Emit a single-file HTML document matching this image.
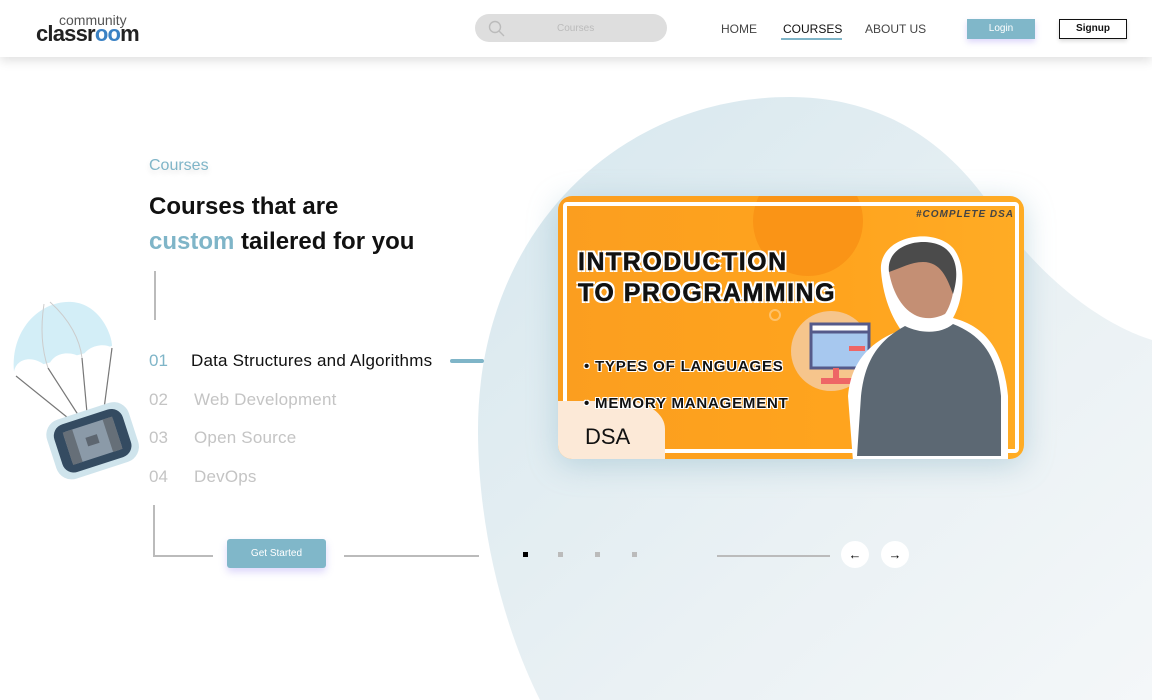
<!DOCTYPE html>
<html><head><meta charset="utf-8"><style>
*{margin:0;padding:0;box-sizing:border-box}
body{width:1152px;height:700px;overflow:hidden;background:#fff;font-family:"Liberation Sans",sans-serif;position:relative}
.abs{position:absolute}
.hdr{left:0;top:0;width:1152px;height:57px;background:#fff;box-shadow:0 4px 10px rgba(0,0,0,.12);z-index:5}
.t{position:absolute;white-space:nowrap}
</style></head><body>
<svg class="abs" style="left:0;top:0" width="1152" height="700">
<defs><linearGradient id="g" x1="0" y1="0" x2="1" y2="1"><stop offset="0" stop-color="#d6e7ee"/><stop offset="0.6" stop-color="#eaf1f4"/><stop offset="1" stop-color="#f4f7f9"/></linearGradient></defs>
<path d="M478 430 C478 230 620 97 790 97 C880 97 950 140 1000 220 C1060 300 1120 330 1152 340 L1152 700 L540 700 C500 620 478 520 478 430Z" fill="url(#g)"/>
</svg>
<div class="abs hdr">
 <div class="t" style="left:59px;top:12px;font-size:14px;color:#555;">community</div>
 <div class="t" style="left:36px;top:21px;font-size:22px;font-weight:bold;color:#222;letter-spacing:-0.8px">classr<span style="color:#3b82c4">oo</span>m</div>
 <div class="abs" style="left:475px;top:14px;width:192px;height:28px;border-radius:14px;background:#dedede"></div>
 <svg class="abs" style="left:488px;top:20px" width="18" height="18"><circle cx="7" cy="7" r="5.5" fill="none" stroke="#bbb" stroke-width="1.4"/><line x1="11" y1="11" x2="16" y2="16" stroke="#bbb" stroke-width="1.4"/></svg>
 <div class="t" style="left:557px;top:23px;font-size:10px;color:#bbb">Courses</div>
 <div class="t" style="left:721px;top:22px;font-size:12px;color:#444">HOME</div>
 <div class="t" style="left:783px;top:22px;font-size:12px;color:#111">COURSES</div>
 <div class="abs" style="left:781px;top:38px;width:61px;height:2px;background:#7fb5c8"></div>
 <div class="t" style="left:865px;top:22px;font-size:12px;color:#444">ABOUT US</div>
 <div class="abs" style="left:967px;top:19px;width:68px;height:20px;background:#80b7c9;box-shadow:0 3px 6px rgba(140,120,240,.3);color:#fff;font-size:10px;text-align:center;line-height:20px">Login</div>
 <div class="abs" style="left:1059px;top:19px;width:68px;height:20px;border:1.5px solid #111;color:#111;font-size:10px;font-weight:bold;text-align:center;line-height:17px;box-shadow:0 2px 4px rgba(0,0,0,.15)">Signup</div>
</div>
<div class="t" style="left:149px;top:157px;font-size:16px;color:#7fb5c8;text-shadow:0 3px 6px rgba(0,0,0,.12)">Courses</div>
<div class="t" style="left:149px;top:193px;font-size:24px;font-weight:bold;color:#111">Courses that are</div>
<div class="t" style="left:149px;top:228px;font-size:24px;font-weight:bold;color:#111"><span style="color:#7fb5c8">custom</span> tailered for you</div>
<div class="abs" style="left:154px;top:271px;width:2px;height:49px;background:#bbb"></div>
<div class="t" style="left:149px;top:351px;font-size:17px;color:#7fb5c8">01</div>
<div class="t" style="left:191px;top:351px;font-size:17px;color:#111;letter-spacing:.2px">Data Structures and Algorithms</div>
<div class="abs" style="left:450px;top:359px;width:34px;height:4px;border-radius:2px;background:#7fb5c8"></div>
<div class="t" style="left:149px;top:390px;font-size:17px;color:#c4c4c4">02</div>
<div class="t" style="left:194px;top:390px;font-size:17px;color:#c4c4c4;letter-spacing:.2px">Web Development</div>
<div class="t" style="left:149px;top:428px;font-size:17px;color:#c4c4c4">03</div>
<div class="t" style="left:194px;top:428px;font-size:17px;color:#c4c4c4;letter-spacing:.2px">Open Source</div>
<div class="t" style="left:149px;top:467px;font-size:17px;color:#c4c4c4">04</div>
<div class="t" style="left:194px;top:467px;font-size:17px;color:#c4c4c4;letter-spacing:.2px">DevOps</div>
<div class="abs" style="left:153px;top:505px;width:2px;height:51px;background:#bbb"></div>
<div class="abs" style="left:153px;top:555px;width:60px;height:2px;background:#bbb"></div>
<div class="abs" style="left:227px;top:539px;width:99px;height:29px;border-radius:3px;background:#80b7c9;box-shadow:0 4px 8px rgba(140,120,240,.3);color:#fff;font-size:10px;text-align:center;line-height:29px">Get Started</div>
<div class="abs" style="left:344px;top:555px;width:135px;height:2px;background:#bbb"></div>
<div class="abs" style="left:523px;top:552px;width:5px;height:5px;background:#000"></div>
<div class="abs" style="left:558px;top:552px;width:5px;height:5px;background:#bbb"></div>
<div class="abs" style="left:595px;top:552px;width:5px;height:5px;background:#bbb"></div>
<div class="abs" style="left:632px;top:552px;width:5px;height:5px;background:#bbb"></div>
<div class="abs" style="left:717px;top:555px;width:113px;height:2px;background:#bbb"></div>
<div class="abs" style="left:841px;top:541px;width:28px;height:27px;border-radius:50%;background:#fff;text-align:center;line-height:27px;font-size:13px">←</div>
<div class="abs" style="left:881px;top:541px;width:28px;height:27px;border-radius:50%;background:#fff;text-align:center;line-height:27px;font-size:13px">→</div>
<svg class="abs" style="left:0;top:290px" width="160" height="200">
<path d="M14 82 C10 40 40 10 72 12 C100 14 112 45 112 56 Z" fill="#d3eef7"/>
<path d="M14 82 C16 68 34 64 48 78 C52 62 70 60 82 68 C86 56 104 52 112 58 L112 62 L14 86Z" fill="#fff"/>
<g stroke="#777" stroke-width="1.2" fill="none"><line x1="16" y1="86" x2="78" y2="136"/><line x1="48" y1="78" x2="84" y2="134"/><line x1="82" y1="68" x2="88" y2="134"/><line x1="112" y1="58" x2="102" y2="134"/></g>
<g stroke="#ccc" fill="none"><path d="M44 14 C40 40 42 60 48 78"/><path d="M50 12 C70 30 80 50 82 68"/></g>
<g transform="rotate(-18 92 152)"><rect x="50" y="120" width="86" height="62" rx="16" fill="#cfe4ec"/><rect x="57" y="126" width="72" height="50" rx="12" fill="#344b61"/><rect x="67" y="134" width="52" height="34" rx="3" fill="#8b9aa8"/><rect x="67" y="134" width="10" height="34" fill="#666f78"/><rect x="109" y="134" width="10" height="34" fill="#666f78"/><rect x="87" y="146" width="12" height="9" fill="#5d6670"/></g>
</svg>
<div class="abs" style="left:558px;top:196px;width:466px;height:263px;border-radius:14px;overflow:hidden;box-shadow:0 6px 30px rgba(120,170,190,.4);background:linear-gradient(90deg,#fb9e1f,#ffa41e 60%,#ffac25)">
 <div class="abs" style="left:195px;top:-30px;width:110px;height:110px;border-radius:50%;background:#fa9416"></div>
 <div class="abs" style="left:5px;top:6px;width:456px;height:251px;border:4px solid #fff;border-radius:4px"></div>
 <div class="abs" style="left:233px;top:115px;width:80px;height:80px;border-radius:50%;background:#f6c58c"></div>
 <svg class="abs" style="left:247px;top:124px" width="68" height="68"><rect x="6" y="4" width="58" height="44" fill="#a7c8ef" stroke="#555a8a" stroke-width="3"/><rect x="6" y="4" width="58" height="8" fill="#fff" stroke="#555a8a" stroke-width="3"/><rect x="28" y="48" width="6" height="10" fill="#e66"/><rect x="16" y="58" width="32" height="6" fill="#e66"/><rect x="44" y="26" width="16" height="5" fill="#e66"/></svg>
 <div class="abs" style="left:211px;top:113px;width:12px;height:12px;border-radius:50%;border:2px solid #fff5;"></div>
 <div class="t" style="left:358px;top:13px;font-size:10px;font-weight:bold;font-style:italic;color:#444;letter-spacing:1px">#COMPLETE DSA</div>
 <div class="t" style="left:20px;top:51px;font-size:25px;font-weight:900;color:#111;letter-spacing:1.5px;line-height:31px;-webkit-text-stroke:0.5px #111;text-shadow:2px 2px 0 #fff,-2px -2px 0 #fff,2px -2px 0 #fff,-2px 2px 0 #fff">INTRODUCTION<br>TO PROGRAMMING</div>
 <svg class="abs" style="left:285px;top:30px" width="180" height="235"><path d="M38 45 C35 10 90 0 110 22 C125 40 120 75 110 92 C140 100 160 120 165 170 L165 235 L10 235 L5 170 C8 135 28 115 58 104 C48 90 40 70 38 45Z" fill="#fff"/><path d="M46 46 C44 18 90 10 104 26 C116 40 112 74 102 88 C94 92 84 94 74 90 C60 84 50 68 46 46Z" fill="#c48f74"/><path d="M46 46 C42 14 92 8 106 26 C116 38 114 55 110 68 C104 52 98 36 80 36 C68 36 58 42 46 46Z" fill="#4b4b4b"/><path d="M62 100 C40 112 22 130 18 170 L14 230 L158 230 L158 170 C154 130 140 110 110 98 C98 108 78 108 62 100Z" fill="#5c6873"/></svg>
 <div class="abs" style="left:0;top:205px;width:107px;height:60px;background:#fce9d7;border-top-right-radius:40px 28px"></div>
 <div class="t" style="left:26px;top:162px;font-size:15px;font-weight:bold;color:#111;letter-spacing:.8px;text-shadow:1px 1px 0 #fff,-1px -1px 0 #fff,1px -1px 0 #fff,-1px 1px 0 #fff">• TYPES OF LANGUAGES</div>
 <div class="t" style="left:26px;top:199px;font-size:15px;font-weight:bold;color:#111;letter-spacing:.8px;text-shadow:1px 1px 0 #fff,-1px -1px 0 #fff,1px -1px 0 #fff,-1px 1px 0 #fff">• MEMORY MANAGEMENT</div>
 <div class="t" style="left:27px;top:228px;font-size:22px;color:#111">DSA</div>
</div>
</body></html>
